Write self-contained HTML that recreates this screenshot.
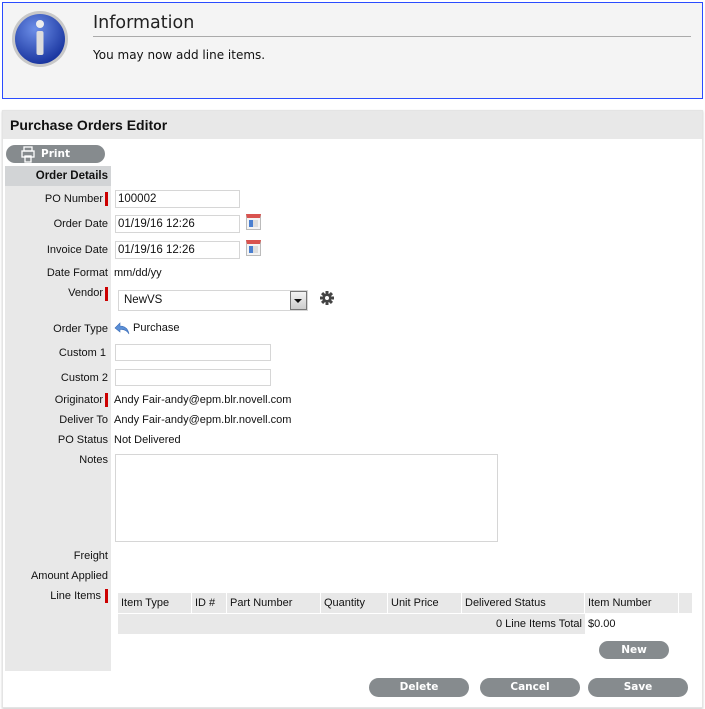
<!DOCTYPE html>
<html><head><meta charset="utf-8"><style>
*{box-sizing:border-box;margin:0;padding:0}
body{width:705px;height:709px;background:#fff;position:relative;overflow:hidden;font-family:"Liberation Sans",Arial,sans-serif;font-size:11px;color:#111}
.a{position:absolute}
.lbl{position:absolute;right:597px;text-align:right;white-space:nowrap;font-size:11px}
.req{position:absolute;left:105px;width:3px;height:14px;background:#c00}
.inp{position:absolute;border:1px solid #d6d6d6;background:#fff;font-size:11.5px;padding-left:2px;line-height:16px}
.btn{position:absolute;background:#868b8e;border-radius:10px;color:#fff;font-family:"DejaVu Sans",sans-serif;font-weight:bold;font-size:10.5px;text-align:center}
.cal{position:absolute;width:15px;height:16px;background:#f4f4f4;border:1px solid #bbb;border-top:4px solid #d9534f}
.cal:after{content:"";position:absolute;left:2px;top:2px;width:9px;height:7px;background:linear-gradient(90deg,#4a7fd0 4px,#ddd 4px)}
.th{position:absolute;top:593px;height:20px;background:#e8e8e8;line-height:20px;padding-left:3px;font-size:11px}
</style></head><body>
<div class="a" style="left:2px;top:2px;width:701px;height:97px;border:1px solid #2a4cff;background:#f4f4f4"></div>
<svg class="a" style="left:11px;top:10px" width="60" height="60" viewBox="0 0 60 60">
<defs><radialGradient id="g" cx="40%" cy="30%" r="70%"><stop offset="0" stop-color="#6d8fe8"/><stop offset="1" stop-color="#1a36a0"/></radialGradient></defs>
<circle cx="29" cy="29" r="28" fill="#c8c8c8"/><circle cx="29" cy="29" r="25" fill="url(#g)"/>
<circle cx="29" cy="14" r="4" fill="#eee"/><rect x="25.5" y="21" width="7" height="24" rx="2" fill="#ddd"/></svg>
<div class="a" style="left:93px;top:13px;font-family:'DejaVu Sans',sans-serif;font-size:17.5px;color:#222">Information</div>
<div class="a" style="left:93px;top:36px;width:598px;height:1px;background:#aaa"></div>
<div class="a" style="left:93px;top:48px;font-family:'DejaVu Sans',sans-serif;font-size:12px">You may now add line items.</div>

<div class="a" style="left:2px;top:110px;width:701px;height:598px;border:1px solid #e4e4e4;box-shadow:0 1px 2px #ccc"></div>
<div class="a" style="left:3px;top:111px;width:699px;height:28px;background:#e8e8e8"></div>
<div class="a" style="left:10px;top:117px;font-weight:bold;font-size:14px">Purchase Orders Editor</div>

<div class="btn" style="left:6px;top:145px;width:99px;height:18px;line-height:18px;text-align:left;padding-left:35px">Print</div>
<svg class="a" style="left:21px;top:146px" width="14" height="17" viewBox="0 0 14 17" fill="none" stroke="#fff" stroke-width="1.3"><rect x="3" y="1" width="8" height="4"/><rect x="1" y="5" width="12" height="6"/><rect x="4" y="10" width="6" height="6"/></svg>

<div class="a" style="left:5px;top:166px;width:106px;height:505px;background:#e8e8e8"></div>
<div class="a" style="left:5px;top:166px;width:106px;height:20px;background:#d2d4d6"></div>
<div class="lbl" style="top:170px;font-weight:bold;right:597px;font-size:11.5px">Order Details</div>

<div class="lbl" style="top:193px;right:602px">PO Number</div><div class="req" style="top:192px"></div>
<div class="inp" style="left:115px;top:190px;width:125px;height:18px">100002</div>
<div class="lbl" style="top:218px">Order Date</div>
<div class="inp" style="left:115px;top:215px;width:125px;height:18px">01/19/16 12:26</div><div class="cal" style="left:246px;top:214px"></div>
<div class="lbl" style="top:244px">Invoice Date</div>
<div class="inp" style="left:115px;top:241px;width:125px;height:18px">01/19/16 12:26</div><div class="cal" style="left:246px;top:240px"></div>
<div class="lbl" style="top:267px">Date Format</div><div class="a" style="left:114px;top:267px">mm/dd/yy</div>
<div class="lbl" style="top:287px;right:602px">Vendor</div><div class="req" style="top:287px"></div>
<div class="inp" style="left:118px;top:290px;width:190px;height:21px;line-height:19px;padding-left:5px">NewVS</div>
<div class="a" style="left:290px;top:291px;width:17px;height:19px;border:1px solid #777;background:linear-gradient(#f4f4f4,#ccc)"></div>
<div class="a" style="left:294px;top:299px;width:0;height:0;border-left:4px solid transparent;border-right:4px solid transparent;border-top:4px solid #111"></div>
<svg class="a" style="left:320px;top:291px" width="14" height="14" viewBox="0 0 14 14"><g fill="#444"><circle cx="7" cy="7" r="4.5"/><rect x="5.5" y="0" width="3" height="14"/><rect x="0" y="5.5" width="14" height="3"/><rect x="5.5" y="0" width="3" height="14" transform="rotate(45 7 7)"/><rect x="5.5" y="0" width="3" height="14" transform="rotate(-45 7 7)"/></g><circle cx="7" cy="7" r="2" fill="#fff"/></svg>
<div class="lbl" style="top:323px">Order Type</div>
<svg class="a" style="left:114px;top:322px" width="16" height="13" viewBox="0 0 16 13"><path d="M6 1 L1 6 L6 10 L6 7.5 C10 7 13 8.5 15 12 C14 7 11 4 6 4 Z" fill="#5b8fd6" stroke="#3a6cb8" stroke-width=".6"/></svg>
<div class="a" style="left:133px;top:322px">Purchase</div>
<div class="lbl" style="top:347px;right:599px">Custom 1</div>
<div class="inp" style="left:115px;top:344px;width:156px;height:17px"></div>
<div class="lbl" style="top:372px">Custom 2</div>
<div class="inp" style="left:115px;top:369px;width:156px;height:17px"></div>
<div class="lbl" style="top:394px;right:602px">Originator</div><div class="req" style="top:393px"></div>
<div class="a" style="left:114px;top:394px">Andy Fair-andy@epm.blr.novell.com</div>
<div class="lbl" style="top:414px">Deliver To</div><div class="a" style="left:114px;top:414px">Andy Fair-andy@epm.blr.novell.com</div>
<div class="lbl" style="top:434px">PO Status</div><div class="a" style="left:114px;top:434px">Not Delivered</div>
<div class="lbl" style="top:454px">Notes</div>
<div class="inp" style="left:115px;top:454px;width:383px;height:88px"></div>
<div class="lbl" style="top:550px">Freight</div>
<div class="lbl" style="top:570px">Amount Applied</div>
<div class="lbl" style="top:590px;right:604px">Line Items</div><div class="req" style="top:589px"></div>

<div class="th" style="left:118px;width:73px">Item Type</div>
<div class="th" style="left:192px;width:34px">ID #</div>
<div class="th" style="left:227px;width:93px">Part Number</div>
<div class="th" style="left:321px;width:66px">Quantity</div>
<div class="th" style="left:388px;width:73px">Unit Price</div>
<div class="th" style="left:462px;width:122px">Delivered Status</div>
<div class="th" style="left:585px;width:93px">Item Number</div>
<div class="th" style="left:679px;width:13px"></div>
<div class="a" style="left:118px;top:614px;width:467px;height:20px;background:#e8e8e8;text-align:right;padding-right:3px;line-height:20px">0 Line Items Total</div>
<div class="a" style="left:588px;top:614px;line-height:20px">$0.00</div>

<div class="btn" style="left:599px;top:641px;width:70px;height:18px;line-height:18px">New</div>
<div class="btn" style="left:369px;top:678px;width:100px;height:19px;line-height:19px">Delete</div>
<div class="btn" style="left:480px;top:678px;width:100px;height:19px;line-height:19px">Cancel</div>
<div class="btn" style="left:588px;top:678px;width:100px;height:19px;line-height:19px">Save</div>
</body></html>
